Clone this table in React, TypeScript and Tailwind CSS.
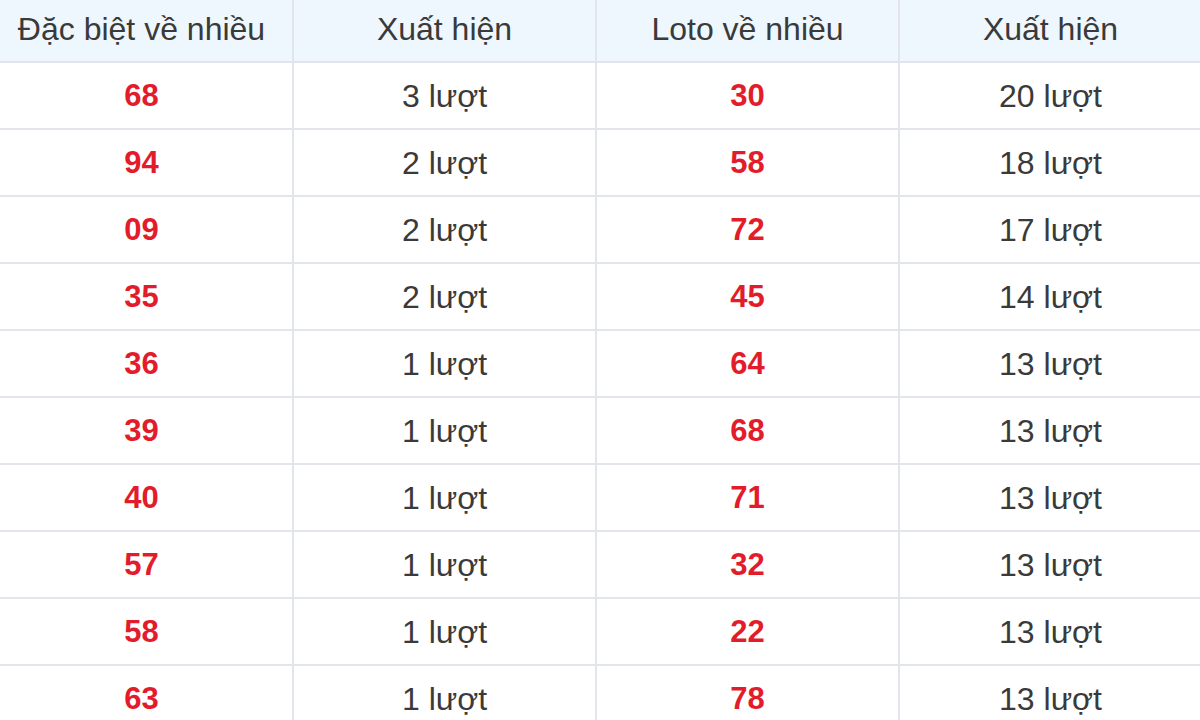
const rows: [string, string, string, string][] = [
  ["68", "3 lượt", "30", "20 lượt"],
  ["94", "2 lượt", "58", "18 lượt"],
  ["09", "2 lượt", "72", "17 lượt"],
  ["35", "2 lượt", "45", "14 lượt"],
  ["36", "1 lượt", "64", "13 lượt"],
  ["39", "1 lượt", "68", "13 lượt"],
  ["40", "1 lượt", "71", "13 lượt"],
  ["57", "1 lượt", "32", "13 lượt"],
  ["58", "1 lượt", "22", "13 lượt"],
  ["63", "1 lượt", "78", "13 lượt"],
];

const th = "border-2 border-[#e2e6eb] bg-[#eef6fe] h-[67px] font-normal text-[32px] leading-none text-[#3a3a3a]";
const num = "border-2 border-[#e2e6eb] h-[67px] font-bold text-[31px] leading-none text-[#e31c2b]";
const cnt = "border-2 border-[#e2e6eb] h-[67px] text-[32px] leading-none text-[#3a3a3a]";

export default function App() {
  return (
    <div className="w-[1200px] h-[720px] overflow-hidden bg-white font-['Liberation_Sans',Arial,sans-serif]">
      <table className="table-fixed border-collapse w-[1214px] ml-[-11px] mt-[-6px] text-center">
        <thead>
          <tr>
            <th className={th}>Đặc biệt về nhiều</th>
            <th className={th}>Xuất hiện</th>
            <th className={th}>Loto về nhiều</th>
            <th className={th}>Xuất hiện</th>
          </tr>
        </thead>
        <tbody>
          {rows.map((r, i) => (
            <tr key={i}>
              <td className={num}>{r[0]}</td>
              <td className={cnt}>{r[1]}</td>
              <td className={num}>{r[2]}</td>
              <td className={cnt}>{r[3]}</td>
            </tr>
          ))}
        </tbody>
      </table>
    </div>
  );
}
